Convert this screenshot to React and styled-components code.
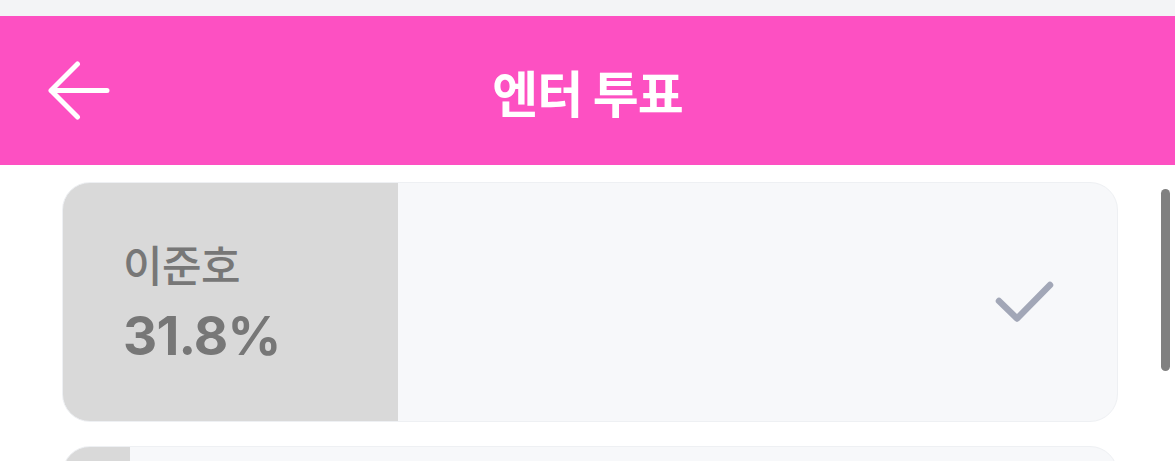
import React from "react";
import styled, { createGlobalStyle } from "styled-components";

const GlobalStyle = createGlobalStyle`
  html, body {
    margin: 0;
    padding: 0;
    background: #ffffff;
    font-family: "Inter", "Noto Sans CJK KR", sans-serif;
    overflow: hidden;
  }
`;

const candidates = [
  { id: 1, name: "이준호", rate: 31.8, voted: true },
  { id: 2, name: "김서연", rate: 6.4, voted: false },
];

const ArrowLeft = () => (
  <svg width="62" height="60" viewBox="0 0 62 60" fill="none">
    <path
      d="M59 29.5H3M3 29.5L29.5 3M3 29.5L29.5 56"
      stroke="#fff"
      strokeWidth="5"
      strokeLinecap="round"
      strokeLinejoin="round"
    />
  </svg>
);

const CheckMark = () => (
  <svg width="62" height="46" viewBox="0 0 62 46" fill="none">
    <path
      d="M6 22L24 39.5L57 6"
      stroke="#a2a7b7"
      strokeWidth="6.5"
      strokeLinecap="round"
      strokeLinejoin="round"
    />
  </svg>
);

const App = () => {
  return (
    <>
      <GlobalStyle />
      <Page>
        <StatusStrip />
        <Header>
          <BackButton aria-label="back">
            <ArrowLeft />
          </BackButton>
          <Title>엔터 투표</Title>
        </Header>
        <Body>
          <List>
            {candidates.map((c) => (
              <Card key={c.id} rate={c.rate}>
                <Info>
                  <Name>{c.name}</Name>
                  <Rate>{c.rate}%</Rate>
                </Info>
                {c.voted && (
                  <Check>
                    <CheckMark />
                  </Check>
                )}
              </Card>
            ))}
          </List>
          <ScrollThumb />
        </Body>
      </Page>
    </>
  );
};

export default App;

const Page = styled.div`
  width: 100%;
  height: 100vh;
  display: flex;
  flex-direction: column;
  overflow: hidden;
`;

const StatusStrip = styled.div`
  flex-shrink: 0;
  height: 16px;
  background: #f3f4f6;
`;

const Header = styled.header`
  flex-shrink: 0;
  height: 149px;
  background: #fd50c2;
  display: grid;
  grid-template-columns: 1fr auto 1fr;
  align-items: center;
  padding: 0 48px;
`;

const BackButton = styled.button`
  justify-self: start;
  display: flex;
  align-items: center;
  background: none;
  border: 0;
  padding: 0;
  cursor: pointer;
`;

const Title = styled.h1`
  margin: 0;
  color: #ffffff;
  font-size: 50px;
  font-weight: 700;
  letter-spacing: -1px;
  font-family: "Noto Sans CJK KR", sans-serif;
`;

const Body = styled.main`
  position: relative;
  flex: 1;
  min-height: 0;
  overflow: hidden;
`;

const List = styled.div`
  display: flex;
  flex-direction: column;
  gap: 24px;
  padding: 17px 57px 0 62px;
`;

const Card = styled.div`
  flex-shrink: 0;
  height: 240px;
  box-sizing: border-box;
  border-radius: 28px;
  border: 1px solid #eef0f3;
  background: ${({ rate }) =>
    `linear-gradient(to right, #d9d9d9 ${rate}%, #f7f8fa ${rate}%)`};
  display: flex;
  align-items: center;
  justify-content: space-between;
  padding: 0 62px 0 60px;
`;

const Info = styled.div`
  display: flex;
  flex-direction: column;
  gap: 24px;
  color: #777777;
`;

const Name = styled.span`
  font-family: "Noto Sans CJK KR", sans-serif;
  font-size: 43px;
  font-weight: 500;
  line-height: 1.05;
  letter-spacing: -0.5px;
`;

const Rate = styled.span`
  font-size: 53px;
  font-weight: 700;
  line-height: 1;
  letter-spacing: -0.8px;
`;

const Check = styled.div`
  display: flex;
`;

const ScrollThumb = styled.div`
  position: absolute;
  right: 5px;
  top: 24px;
  width: 9px;
  height: 182px;
  border-radius: 5px;
  background: #808080;
`;
